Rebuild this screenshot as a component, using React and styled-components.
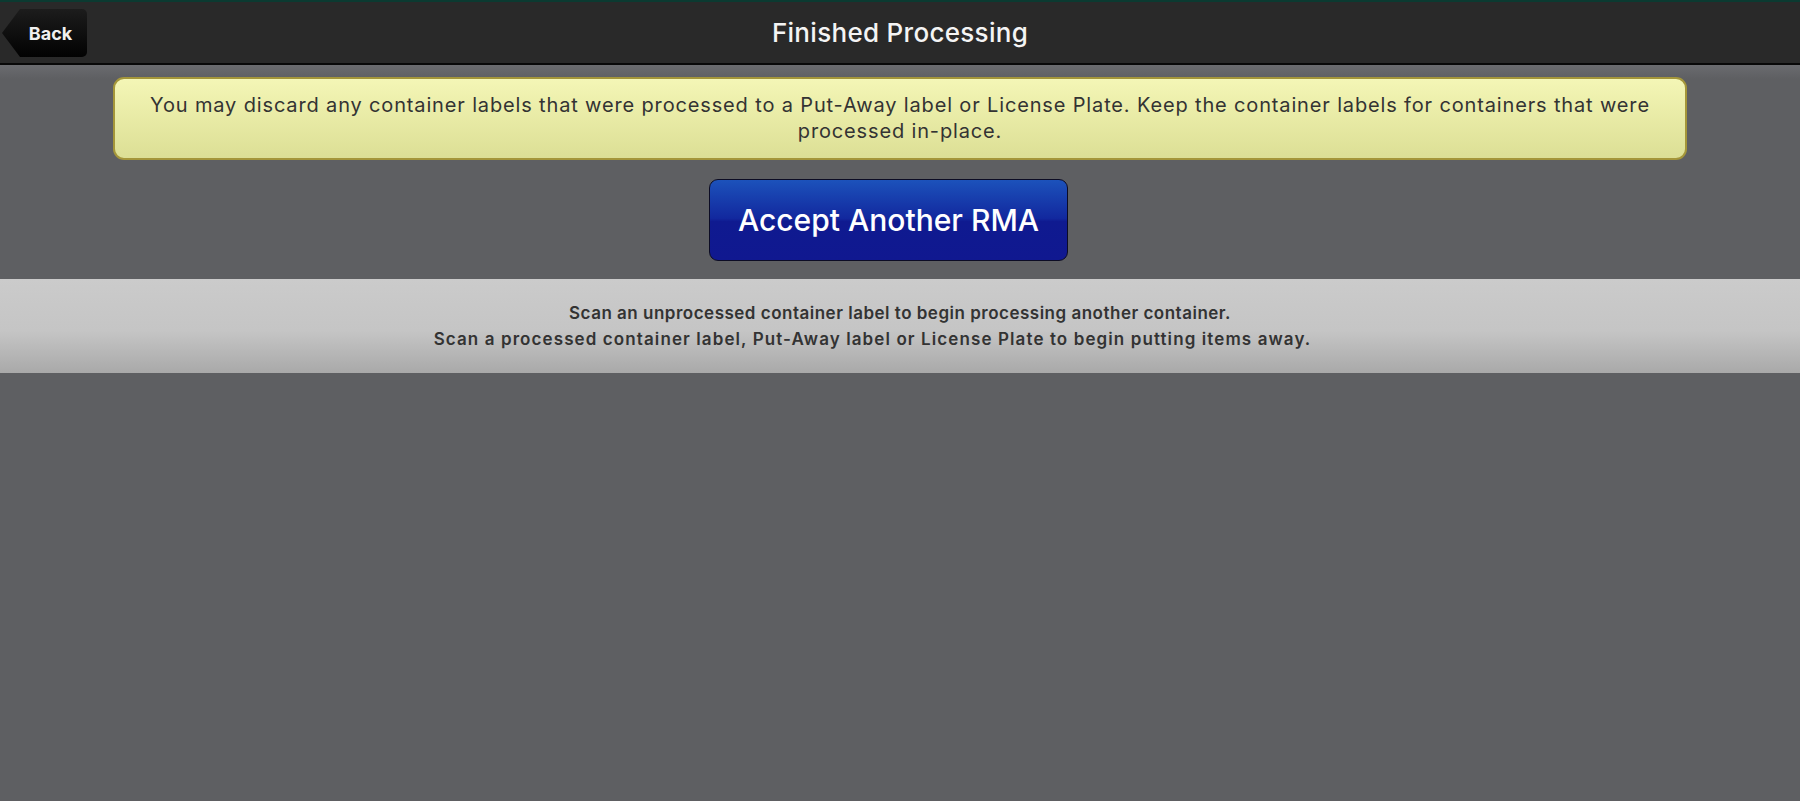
import React from "react";
import styled, { createGlobalStyle } from "styled-components";

const GlobalStyle = createGlobalStyle`
  html, body {
    margin: 0;
    padding: 0;
    height: 100%;
    background: #5e5f62;
    font-family: Inter, "Noto Sans", sans-serif;
  }
  #root {
    min-height: 100vh;
  }
`;

const Page = styled.div`
  min-height: 100vh;
  display: flex;
  flex-direction: column;
  background: #5e5f62;
  border-top: 2px solid #0b3a31;
`;

const Header = styled.header`
  position: relative;
  height: 61px;
  display: flex;
  align-items: center;
  justify-content: center;
  background: #292929;
  border-bottom: 2px solid #080808;
`;

const Title = styled.h1`
  margin: 0;
  font-size: 26px;
  font-weight: 500;
  letter-spacing: 0.3px;
  color: #f4f4f4;
`;

const BackButton = styled.button`
  position: absolute;
  left: 2px;
  top: 7px;
  width: 85px;
  height: 48px;
  padding: 0 0 0 12px;
  border: none;
  color: #f0f0f0;
  font-family: inherit;
  font-size: 18px;
  font-weight: 700;
  background: linear-gradient(#1c1c1c, #020202);
  clip-path: polygon(18px 0, 100% 0, 100% 100%, 18px 100%, 0 50%);
  border-radius: 0 5px 5px 0;
  text-align: center;
`;

const Content = styled.main`
  display: flex;
  flex-direction: column;
  align-items: center;
  padding-top: 12px;
  background: linear-gradient(#6a6b6f 0, #5e5f62 14px);
`;

const Notice = styled.div`
  box-sizing: border-box;
  width: 1574px;
  height: 83px;
  padding: 13px 30px 0;
  border: 2px solid #a4963a;
  border-radius: 11px;
  background: linear-gradient(#f4f6b6, #dcdf95);
  color: #333333;
  font-size: 20px;
  letter-spacing: 0.85px;
  line-height: 26px;
  text-align: center;
`;

const ActionButton = styled.button`
  margin: 19px 23px 0 0;
  width: 359px;
  height: 82px;
  border: 1px solid #0c0c24;
  border-radius: 9px;
  background: linear-gradient(#1c52bb 0%, #12289e 48%, #0f1a90 52%, #101890 100%);
  color: #ffffff;
  font-family: inherit;
  font-size: 30px;
  font-weight: 500;
`;

const ScanBand = styled.div`
  margin-top: 18px;
  align-self: stretch;
  height: 94px;
  box-sizing: border-box;
  padding-top: 21px;
  background: linear-gradient(#cbcbcb 0%, #c5c5c5 55%, #a9a9a9 100%);
  color: #333333;
  font-size: 17px;
  font-weight: 600;
  line-height: 26px;
  text-align: center;
`;

const ScanLine = styled.span`
  display: block;
  padding-right: ${(p) => p.$shift || 0}px;
  letter-spacing: ${(p) => p.$spacing || 0.5}px;
`;

export default function App() {
  return (
    <>
      <GlobalStyle />
      <Page>
        <Header>
          <BackButton>Back</BackButton>
          <Title>Finished Processing</Title>
        </Header>
        <Content>
          <Notice>
            You may discard any container labels that were processed to a Put-Away label or License Plate. Keep
            the container labels for containers that were processed in-place.
          </Notice>
          <ActionButton>Accept Another RMA</ActionButton>
          <ScanBand>
            <ScanLine>Scan an unprocessed container label to begin processing another container.</ScanLine>
            <ScanLine $shift={55} $spacing={1.1}>
              Scan a processed container label, Put-Away label or License Plate to begin putting items away.
            </ScanLine>
          </ScanBand>
        </Content>
      </Page>
    </>
  );
}
